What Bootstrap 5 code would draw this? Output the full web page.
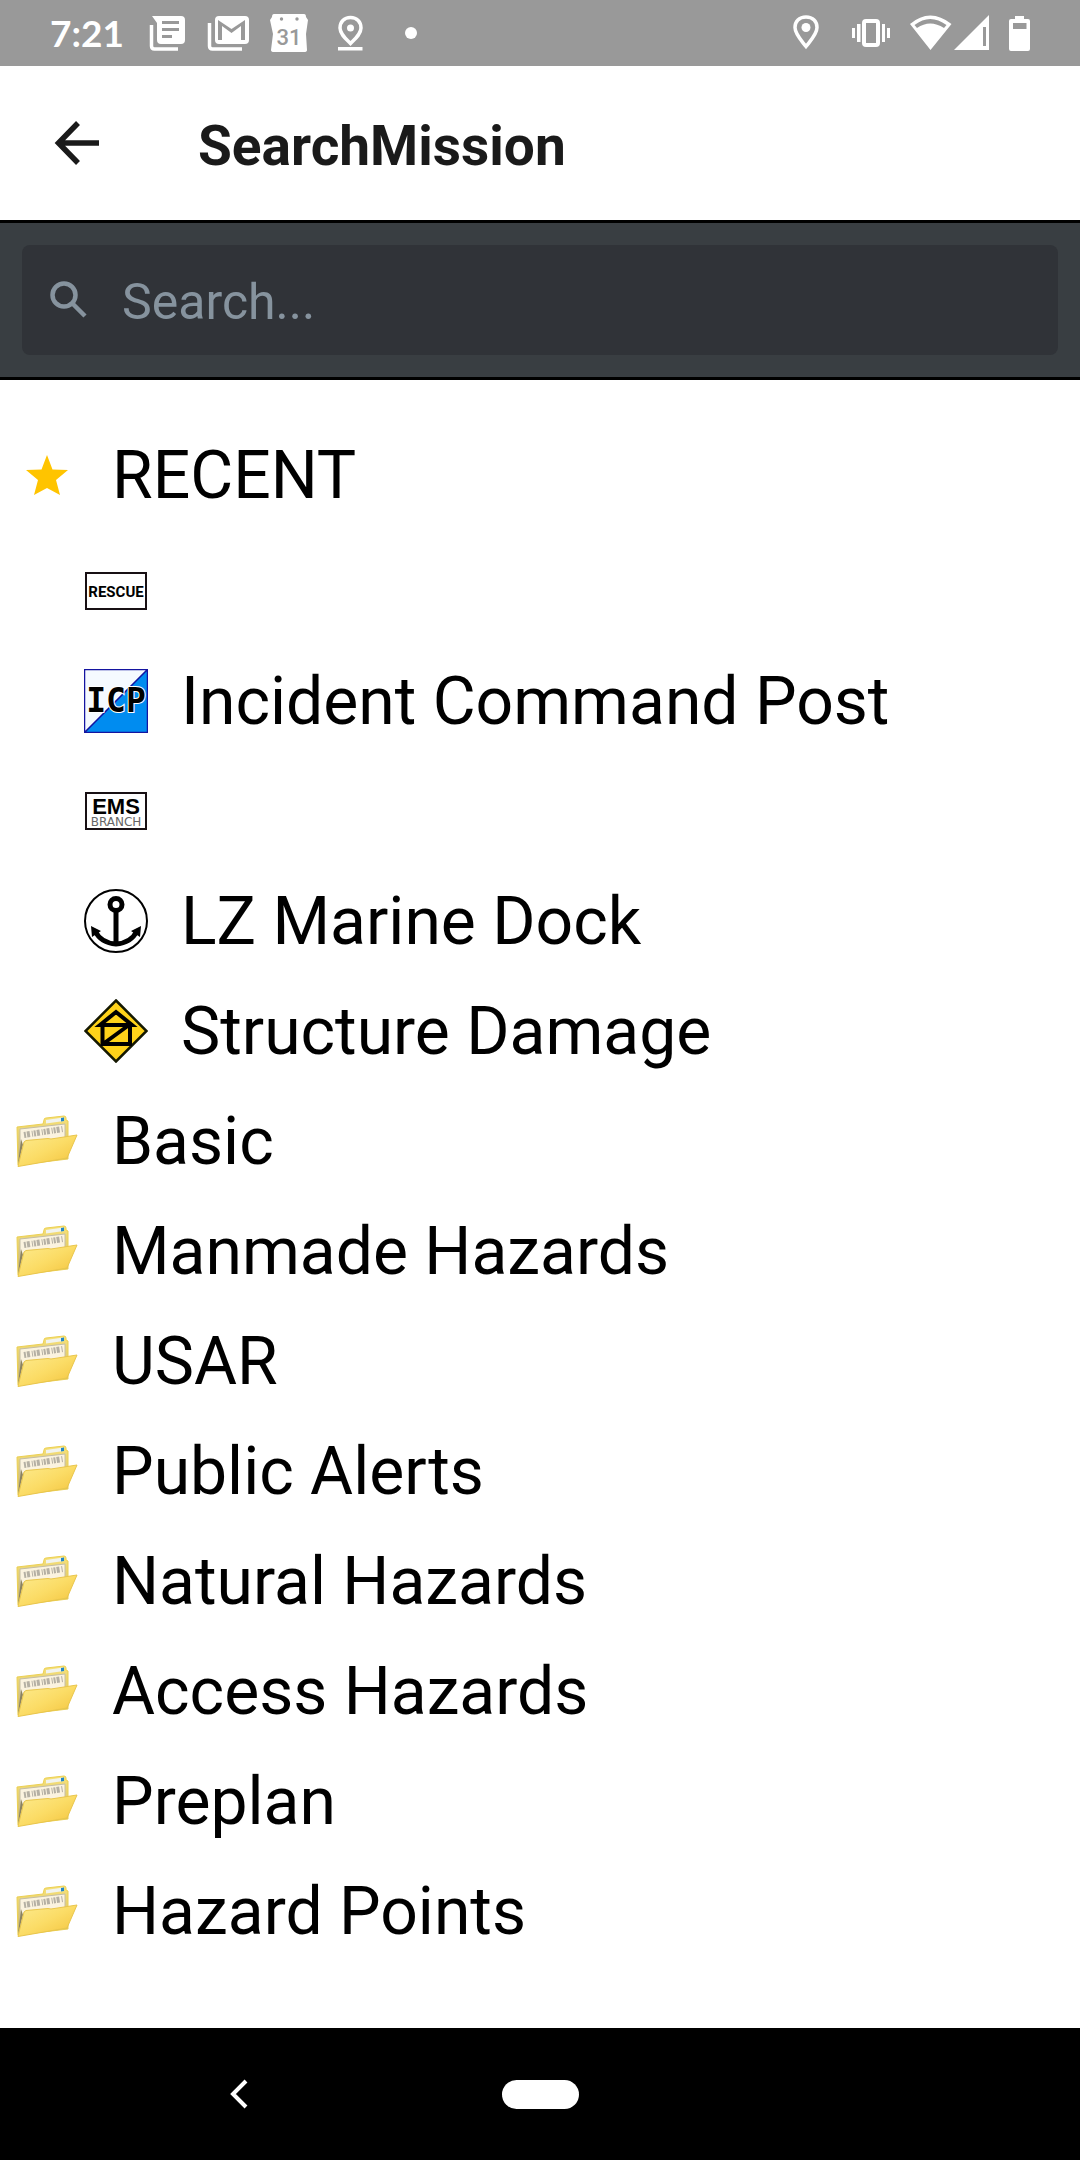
<!DOCTYPE html>
<html lang="en">
<head>
<meta charset="utf-8">
<meta name="viewport" content="width=device-width, initial-scale=1">
<title>SearchMission</title>
<link href="https://cdn.jsdelivr.net/npm/bootstrap@5.3.0/dist/css/bootstrap.min.css" rel="stylesheet">
<style>
  body { font-family: Roboto, "Liberation Sans", sans-serif; color: #000; background: #fff; }
  svg { display: block; flex: none; }
  .status-bar { height: 66px; background: #999; color: #fff; padding: 0 48px 0 50px; }
  .status-time { font: 700 37px/48px Lato, sans-serif; width: 98px; }
  .app-bar { height: 154px; padding: 0 48px; }
  .app-title { font-size: 55px; line-height: 64px; font-weight: 700; color: #1a1a1a; margin: 6px 0 0 94px; }
  .search-strip { background: #393e42; border-top: 3px solid #000; border-bottom: 3px solid #000; padding: 22px; }
  .search-box { height: 110px; border-radius: 8px; background: #303338; color: #86939e; padding-left: 24px; gap: 28px; }
  .search-box .form-control { font-size: 50px; line-height: 60px; color: #86939e; padding: 4px 0 0; }
  .search-box .form-control::placeholder { color: #86939e; opacity: 1; }
  .mission-list { padding-top: 40px; }
  .mission-row { height: 110px; padding-left: 15px; font-size: 66px; color: #000; text-decoration: none; gap: 33px; }
  .mission-row:hover { color: #000; }
  .mission-row.head-row { height: 116px; padding-bottom: 6px; }
  .mission-row.sub-row { padding-left: 84px; }
  .row-label { line-height: 78px; padding-top: 2px; }
  .nav-strip { height: 132px; background: #000; }
</style>
</head>
<body>
<svg width="0" height="0" class="position-absolute" aria-hidden="true">
  <defs>
    <linearGradient id="front" x1="0" y1="0" x2="1" y2="1"><stop offset="0" stop-color="#fdeb8e"/><stop offset=".5" stop-color="#fbdc66"/><stop offset="1" stop-color="#f3c23a"/></linearGradient>
    <linearGradient id="side" x1="0" y1="0" x2="0" y2="1"><stop offset="0" stop-color="#f8e278"/><stop offset="1" stop-color="#c9b468"/></linearGradient>
    <symbol id="folder" viewBox="0 0 64 64">
      <path d="M2 18L28 15L29 11Q29 9 31 9L49 7Q51 7 51 9V11L53 12V50L3 56Z" fill="url(#side)" stroke="#ecd052"/>
      <path d="M31 11L48 8.500L49 12L31 14.500Z" fill="#f1f3ee"/>
      <path d="M46 9L49 8.500V12L46 12.500Z" fill="#2086c8"/>
      <path d="M5 20L50 15V34L5 46Z" fill="#fbf3df" stroke="#c4bda6"/>
      <path d="M9 26L48 20" stroke="#b5b0a4" stroke-width="6" stroke-dasharray="2 1 3 2 1 1"/>
      <path d="M6 30L3 55L8 36Z" fill="#8b8360"/>
      <path d="M9 33L11 31.500L33 29.500L36 30L62 26L52 49L3 57.500Z" fill="url(#front)" stroke="#e9c64c"/>
    </symbol>
  </defs>
</svg>
<div class="d-flex flex-column min-vh-100">
  <div class="status-bar d-flex align-items-center justify-content-between">
    <div class="d-flex align-items-center">
      <span class="status-time">7:21</span>
      <svg width="240" height="66" viewBox="148 0 240 66" role="img" aria-label="Notifications" fill="#fff">
        <path fill-rule="evenodd" d="M152 16H181Q185 16 185 20V40Q185 44 181 44H161Q157 44 157 40V23ZM162 21V24H179V21ZM162 28V31H179V28ZM162 35V38H172V35Z"/>
        <path d="M151.500 25V46Q151.500 49 154.500 49H178" fill="none" stroke="#fff" stroke-width="3.500"/>
        <path fill-rule="evenodd" d="M219 16H245Q249 16 249 20V40Q249 44 245 44H219Q215 44 215 40V20Q215 16 219 16ZM218 20V40H222V26L231.500 33L241 26V40H245V20L231.500 29Z"/>
        <path d="M209.500 23V46Q209.500 49 212.500 49H242" fill="none" stroke="#fff" stroke-width="3.500"/>
        <path d="M274 14H304Q306 14 306 17L308 20L306 34L307 50Q307 52 304 52H274Q271 52 271 50L273 34L270 20L272 17Q272 14 274 14Z"/>
        <circle cx="281.500" cy="19" r="1.700" fill="#999"/><circle cx="297" cy="19" r="1.700" fill="#999"/>
        <text x="289" y="45" text-anchor="middle" font-family="Roboto" font-weight="500" font-size="22" fill="#999">31</text>
        <path d="M350.500 17.500C344 17.500 340 22 340 28C340 34 346 39 350.500 43.500C355 39 361 34 361 28C361 22 357 17.500 350.500 17.500Z" fill="none" stroke="#fff" stroke-width="3.500"/>
        <circle cx="350.500" cy="28" r="3.500"/><path d="M338 47H362.500V50.500H338Z"/>
      </svg>
      <svg width="32" height="66" viewBox="388 0 32 66" aria-hidden="true" fill="#fff"><circle cx="411" cy="33" r="6"/></svg>
    </div>
    <svg width="240" height="66" viewBox="792 0 240 66" role="img" aria-label="Location, vibrate, Wi-Fi, signal, battery" fill="#fff">
      <path d="M806 17C799 17 795 21.500 795 27.500C795 34 801 40 806 46.500C811 40 817 34 817 27.500C817 21.500 813 17 806 17Z" fill="none" stroke="#fff" stroke-width="3.500"/><circle cx="806" cy="27.500" r="4.500"/>
      <rect x="864" y="21" width="14" height="24" rx="2" fill="none" stroke="#fff" stroke-width="4"/>
      <path d="M852 28H855V38H852ZM857 24H860.500V42H857ZM882 24H885V42H882ZM887 28H890V38H887Z"/>
      <path fill-rule="evenodd" d="M910 24Q930 7 951.500 24L930.500 50ZM914.500 25L917 28Q930 19 944 28L946.500 25Q930 13 914.500 25Z"/>
      <path fill-rule="evenodd" d="M954 50L989 15V50ZM983 27V46H986V27Z"/>
      <path fill-rule="evenodd" d="M1015 16H1024V19H1028Q1030 19 1030 21V49Q1030 51 1028 51H1011Q1009 51 1009 49V21Q1009 19 1011 19H1015ZM1013 23V29H1026.500V23Z"/>
    </svg>
  </div>

  <header class="app-bar d-flex align-items-center">
    <button type="button" class="btn p-0 border-0" aria-label="Back"><svg width="56" height="56" viewBox="0 0 56 56" fill="none" stroke="#1a1a1a" stroke-width="5.500"><path d="M51 28H11M30 8L10.500 28L30 48"/></svg></button>
    <h1 class="app-title">SearchMission</h1>
  </header>

  <div class="search-strip">
    <div class="search-box d-flex align-items-center">
      <svg width="48" height="48" viewBox="0 0 48 48" fill="none" stroke="#86939e" stroke-width="4.500"><circle cx="18" cy="19" r="11.500"/><path d="M26 27L39 40"/></svg>
      <input type="text" class="form-control bg-transparent border-0 shadow-none" placeholder="Search..." aria-label="Search">
    </div>
  </div>

  <main class="mission-list flex-grow-1">
    <a href="#" class="mission-row head-row d-flex align-items-center"><svg width="64" height="64" viewBox="0 0 64 64"><path fill="#ffc400" d="M32 12L37.500 26.500L53 27L41 37L45 52L32 45L19 52L23 37L11 27L26.500 26.500Z"/></svg><span class="row-label">RECENT</span></a>
    <a href="#" class="mission-row sub-row d-flex align-items-center" aria-label="Rescue"><svg width="64" height="64" viewBox="0 0 64 64"><rect x="2" y="14" width="60" height="36" fill="#fff" stroke="#181014" stroke-width="2"/><text x="32" y="38" text-anchor="middle" font-family="Roboto" font-weight="700" font-size="15">RESCUE</text></svg></a>
    <a href="#" class="mission-row sub-row d-flex align-items-center"><svg width="64" height="64" viewBox="0 0 64 64"><path d="M.5.500H63L.5 63Z" fill="#f5faff"/><path d="M63 .5V63H.5Z" fill="#008cf0"/><path d="M.5.500H63.500V63.500H.5ZM.5 63.500L63.500.500" fill="none" stroke="#1414a0" stroke-width="1.500"/><text x="32" y="43" text-anchor="middle" font-family="DejaVu Sans Mono" font-weight="700" font-size="33" stroke="#fff" stroke-width="2" paint-order="stroke">ICP</text></svg><span class="row-label">Incident Command Post</span></a>
    <a href="#" class="mission-row sub-row d-flex align-items-center" aria-label="EMS Branch"><svg width="64" height="64" viewBox="0 0 64 64"><rect x="2" y="14" width="60" height="36" fill="#fff" stroke="#181014" stroke-width="2"/><text x="32" y="35" text-anchor="middle" font-family="Liberation Sans" font-weight="700" font-size="22">EMS</text><text x="32" y="47" text-anchor="middle" font-family="DejaVu Sans" font-size="12" fill="#666">BRANCH</text></svg></a>
    <a href="#" class="mission-row sub-row d-flex align-items-center"><svg width="64" height="64" viewBox="0 0 64 64" fill="none" stroke="#000"><circle cx="32" cy="32" r="31" stroke-width="2"/><circle cx="32" cy="15.500" r="6" stroke-width="5"/><path d="M32 20V54M11 42Q17 54 32 55Q47 54 53 42" stroke-width="5"/><path d="M7 37L17 42L8 48ZM57 37L47 42L56 48Z" fill="#000" stroke="none"/></svg><span class="row-label">LZ Marine Dock</span></a>
    <a href="#" class="mission-row sub-row d-flex align-items-center"><svg width="64" height="64" viewBox="0 0 64 64" stroke="#000"><path d="M32 1.500L62.500 32L32 62.500L1.500 32Z" fill="#ffd31a" stroke="#141800" stroke-width="2.500"/><path d="M16 26L32 13L48 26ZM18.500 26V45H46V26M19 45L45 26" fill="none" stroke-width="4"/></svg><span class="row-label">Structure Damage</span></a>
    <a href="#" class="mission-row d-flex align-items-center"><svg width="64" height="64"><use href="#folder"/></svg><span class="row-label">Basic</span></a>
    <a href="#" class="mission-row d-flex align-items-center"><svg width="64" height="64"><use href="#folder"/></svg><span class="row-label">Manmade Hazards</span></a>
    <a href="#" class="mission-row d-flex align-items-center"><svg width="64" height="64"><use href="#folder"/></svg><span class="row-label">USAR</span></a>
    <a href="#" class="mission-row d-flex align-items-center"><svg width="64" height="64"><use href="#folder"/></svg><span class="row-label">Public Alerts</span></a>
    <a href="#" class="mission-row d-flex align-items-center"><svg width="64" height="64"><use href="#folder"/></svg><span class="row-label">Natural Hazards</span></a>
    <a href="#" class="mission-row d-flex align-items-center"><svg width="64" height="64"><use href="#folder"/></svg><span class="row-label">Access Hazards</span></a>
    <a href="#" class="mission-row d-flex align-items-center"><svg width="64" height="64"><use href="#folder"/></svg><span class="row-label">Preplan</span></a>
    <a href="#" class="mission-row d-flex align-items-center"><svg width="64" height="64"><use href="#folder"/></svg><span class="row-label">Hazard Points</span></a>
  </main>

  <nav class="nav-strip row g-0 align-items-center" aria-label="System navigation">
    <div class="col d-flex justify-content-center"><button type="button" class="btn p-0 border-0 me-4" aria-label="Back"><svg width="48" height="48" viewBox="0 0 48 48" fill="none" stroke="#fff" stroke-width="4"><path d="M31 11L18 24L31 37"/></svg></button></div>
    <div class="col-auto"><button type="button" class="btn p-0 border-0" aria-label="Home"><svg width="77" height="29" viewBox="0 0 77 29"><rect width="77" height="29" rx="14.500" fill="#fff"/></svg></button></div>
    <div class="col"></div>
  </nav>
</div>
<script src="https://cdn.jsdelivr.net/npm/bootstrap@5.3.0/dist/js/bootstrap.bundle.min.js"></script>
</body>
</html>
